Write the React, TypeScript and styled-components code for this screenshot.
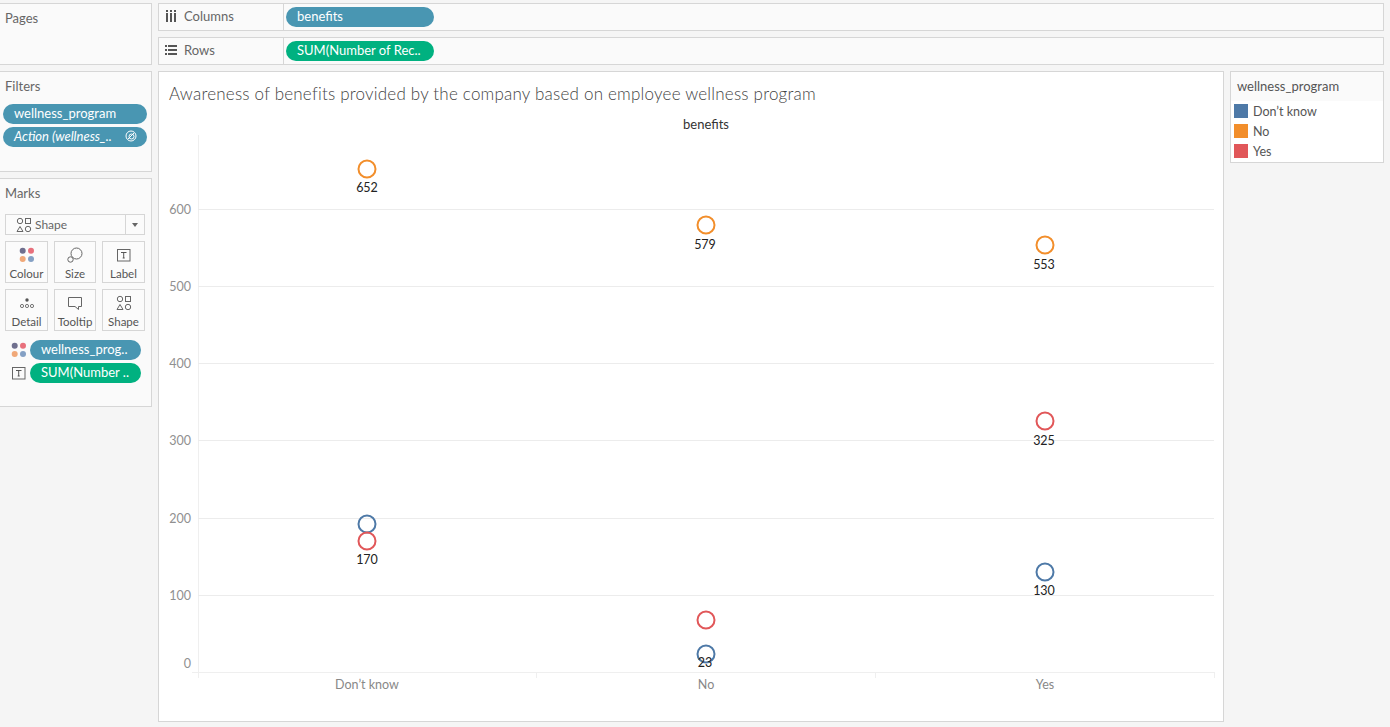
import React from "react";
import styled, { createGlobalStyle } from "styled-components";

const Global = createGlobalStyle`
  html, body { margin: 0; padding: 0; background: #f5f5f5; }
  body { font-family: Lato, "Open Sans", "Liberation Sans", sans-serif; color: #555; }
  #root { width: 1390px; height: 727px; overflow: hidden; }
`;

const Page = styled.div`
  display: grid;
  grid-template-columns: 152px 1226px;
  column-gap: 6px;
  padding-top: 3px;
  width: 1390px;
  height: 727px;
  box-sizing: border-box;
`;
const Side = styled.div`
  display: flex;
  flex-direction: column;
  gap: 6px;
`;
const Panel = styled.section<{ $h: number }>`
  height: ${(p) => p.$h}px;
  box-sizing: border-box;
  background: #fafafa;
  border: 1px solid #d6d6d6;
  border-left: 0;
`;
const PanelTitle = styled.div`
  font-size: 13px;
  line-height: 14px;
  color: #666;
  padding: 7px 0 1px 5px;
`;
const PillStack = styled.div`
  display: flex;
  flex-direction: column;
  gap: 3px;
  padding: 10px 4px 0 3px;
`;
const Pill = styled.div<{ $green?: boolean; $italic?: boolean; $w?: number }>`
  height: 20px;
  width: ${(p) => (p.$w ? `${p.$w}px` : "100%")};
  box-sizing: border-box;
  flex: none;
  border-radius: 10px;
  background: ${(p) => (p.$green ? "#00b180" : "#4996b2")};
  color: #fff;
  font-size: 13px;
  line-height: 18px;
  padding: 0 10px 2px 11px;
  font-style: ${(p) => (p.$italic ? "italic" : "normal")};
  white-space: nowrap;
  display: flex;
  align-items: center;
  justify-content: space-between;
`;
const MarkType = styled.div`
  margin: 13px 6px 0 5px;
  height: 21px;
  box-sizing: border-box;
  border: 1px solid #d6d6d6;
  display: flex;
  align-items: center;
  background: #fbfbfb;
  font-size: 12px;
  color: #666;
`;
const MarkTypeLabel = styled.div`
  flex: 1;
  display: flex;
  align-items: center;
  gap: 3px;
  padding-left: 10px;
`;
const Caret = styled.div`
  width: 18px;
  height: 100%;
  border-left: 1px solid #d6d6d6;
  display: flex;
  align-items: center;
  justify-content: center;
  &::after {
    content: "";
    border-left: 3.5px solid transparent;
    border-right: 3.5px solid transparent;
    border-top: 4px solid #666;
  }
`;
const CardGrid = styled.div`
  display: grid;
  grid-template-columns: 43px 42px 43px;
  grid-auto-rows: 42px;
  gap: 6px;
  margin: 6px 6px 0 5px;
`;
const Card = styled.div`
  border: 1px solid #d6d6d6;
  box-sizing: border-box;
  display: flex;
  flex-direction: column;
  align-items: center;
  background: #fbfbfb;
  font-size: 11.5px;
  line-height: 13px;
  color: #555;
`;
const CardIcon = styled.div`
  height: 24px;
  display: flex;
  align-items: center;
  justify-content: center;
  margin-top: 1px;
`;
const MarkRows = styled.div`
  display: flex;
  flex-direction: column;
  gap: 3px;
  margin: 9px 10px 0 11px;
`;
const MarkRow = styled.div`
  display: flex;
  align-items: center;
  gap: 3px;
`;
const MarkRowIcon = styled.div`
  width: 16px;
  display: flex;
  justify-content: center;
`;
const Main = styled.div`
  display: flex;
  flex-direction: column;
  gap: 6px;
`;
const Shelf = styled.div`
  height: 28px;
  box-sizing: border-box;
  border: 1px solid #d6d6d6;
  background: #fafafa;
  display: flex;
  align-items: center;
`;
const ShelfLabel = styled.div`
  width: 125px;
  height: 100%;
  box-sizing: border-box;
  border-right: 1px solid #d6d6d6;
  display: flex;
  align-items: center;
  gap: 7px;
  padding: 0 0 2px 6px;
  font-size: 13px;
  color: #666;
`;
const ShelfPills = styled.div`
  padding-left: 2px;
`;
const Body = styled.div`
  display: flex;
  gap: 6px;
  align-items: flex-start;
`;
const View = styled.div`
  width: 1066px;
  height: 651px;
  box-sizing: border-box;
  background: #fff;
  border: 1px solid #d6d6d6;
  position: relative;
`;
const Title = styled.div`
  font-size: 17px;
  font-weight: 300;
  line-height: 20px;
  color: #444;
  padding: 12px 0 0 10px;
  letter-spacing: 0.21px;
  white-space: nowrap;
`;
const ChartSvg = styled.svg`
  display: block;
  position: absolute;
  left: 0;
  top: 0;
  text {
    font-family: Lato, "Open Sans", "Liberation Sans", sans-serif;
  }
`;
const Legend = styled.aside`
  width: 154px;
  height: 92px;
  box-sizing: border-box;
  border: 1px solid #d6d6d6;
  background: #fff;
`;
const LegendTitle = styled.div`
  height: 29px;
  background: #fafafa;
  font-size: 13px;
  line-height: 29px;
  color: #555;
  padding-left: 6px;
`;
const LegendRows = styled.div`
  display: flex;
  flex-direction: column;
  gap: 6px;
  padding: 3px 0 0 3px;
`;
const LegendRow = styled.div`
  display: flex;
  align-items: center;
  gap: 5px;
  height: 14px;
  font-size: 12.5px;
  color: #555;
`;
const Swatch = styled.div<{ $c: string }>`
  width: 14px;
  height: 14px;
  background: ${(p) => p.$c};
`;

const ShapeIcon = ({ c = "#666" }: { c?: string }) => (
  <svg width="16" height="16" viewBox="0 0 16 16" fill="none" stroke={c} strokeWidth="1">
    <circle cx="4" cy="4" r="2.7" />
    <rect x="9.5" y="1.5" width="5" height="5" />
    <path d="M4 9.5l3 5H1z" />
    <circle cx="12" cy="12" r="2.7" />
  </svg>
);
const ColourIcon = ({ s = 16 }: { s?: number }) => (
  <svg width={s} height={s} viewBox="0 0 16 16">
    <circle cx="3.7" cy="3.8" r="3" fill="#6f6f8e" />
    <circle cx="12" cy="3.8" r="3" fill="#e8707c" />
    <circle cx="3.7" cy="12" r="3" fill="#f0a878" />
    <circle cx="12" cy="12" r="3" fill="#84a0c4" />
  </svg>
);
const TextBoxIcon = () => (
  <svg width="14" height="13" viewBox="0 0 14 13" fill="none">
    <rect x="0.5" y="0.5" width="12.5" height="11.5" stroke="#666" />
    <path d="M4 3.5h5.5M6.7 3.5v5.5M5.7 9h2" stroke="#555" />
  </svg>
);

const circles = [
  [367, 169, "#f28e2b"], [706, 225, "#f28e2b"], [1045, 245, "#f28e2b"],
  [1045, 421, "#e15759"], [367, 524, "#4e79a7"], [367, 541, "#e15759"],
  [1045, 572, "#4e79a7"], [706, 620, "#e15759"], [706, 654, "#4e79a7"],
] as const;
const values = [
  [367, 187, "652"], [705, 244, "579"], [1044, 264, "553"], [1044, 440, "325"],
  [367, 559, "170"], [1044, 590, "130"], [705, 662, "23"],
] as const;
const grid = [
  [209, "600"], [286, "500"], [363, "400"], [440, "300"], [518, "200"], [595, "100"],
] as const;

const Chart = () => (
  <ChartSvg width="1064" height="649" viewBox="159 72 1064 649">
    <line x1="198.5" y1="135" x2="198.5" y2="678" stroke="#efefef" />
    {grid.map(([y]) => (
      <line key={y} x1="198" x2="1214" y1={y + 0.5} y2={y + 0.5} stroke="#ececec" />
    ))}
    <line x1="192" x2="1214" y1="672.5" y2="672.5" stroke="#efefef" />
    {[536, 875, 1214].map((x) => (
      <line key={x} x1={x + 0.5} x2={x + 0.5} y1="672" y2="678" stroke="#efefef" />
    ))}
    <text x="706" y="129" fontSize="13" fill="#333" textAnchor="middle">benefits</text>
    {grid.map(([y, l]) => (
      <text key={l} x="191" y={y + 5} fontSize="12.500" fill="#909090" textAnchor="end">{l}</text>
    ))}
    <text x="191" y="668" fontSize="12.500" fill="#909090" textAnchor="end">0</text>
    <text x="367" y="689" fontSize="12.500" fill="#888" textAnchor="middle">Don’t know</text>
    <text x="706" y="689" fontSize="12.500" fill="#888" textAnchor="middle">No</text>
    <text x="1045" y="689" fontSize="12.500" fill="#888" textAnchor="middle">Yes</text>
    {circles.map(([x, y, c]) => (
      <circle key={`${x}-${y}`} cx={x} cy={y} r="8.5" fill="none" stroke={c} strokeWidth="2" />
    ))}
    {values.map(([x, y, t]) => (
      <text key={t} x={x} y={y + 5} fontSize="12.500" fill="#222" textAnchor="middle">{t}</text>
    ))}
  </ChartSvg>
);

export default function App() {
  return (
    <Page>
      <Global />
      <Side>
        <Panel $h={62}>
          <PanelTitle>Pages</PanelTitle>
        </Panel>
        <Panel $h={101}>
          <PanelTitle>Filters</PanelTitle>
          <PillStack>
            <Pill>wellness_program</Pill>
            <Pill $italic>
              Action (wellness_..
              <svg width="12" height="12" viewBox="0 0 12 12" fill="none" stroke="#fff">
                <circle cx="6" cy="6" r="5" />
                <circle cx="6.500" cy="6.500" r="2.500" />
                <path d="M3 9l6-6" />
              </svg>
            </Pill>
          </PillStack>
        </Panel>
        <Panel $h={229}>
          <PanelTitle>Marks</PanelTitle>
          <MarkType>
            <MarkTypeLabel>
              <ShapeIcon />
              Shape
            </MarkTypeLabel>
            <Caret />
          </MarkType>
          <CardGrid>
            <Card>
              <CardIcon><ColourIcon /></CardIcon>
              Colour
            </Card>
            <Card>
              <CardIcon>
                <svg width="16" height="16" viewBox="0 0 16 16" fill="none" stroke="#666">
                  <circle cx="9.5" cy="6.5" r="5.5" />
                  <circle cx="3.5" cy="12.5" r="2.7" fill="#fbfbfb" />
                </svg>
              </CardIcon>
              Size
            </Card>
            <Card>
              <CardIcon><TextBoxIcon /></CardIcon>
              Label
            </Card>
            <Card>
              <CardIcon>
                <svg width="16" height="16" viewBox="0 0 16 16" fill="none" stroke="#666" strokeWidth="0.9">
                  <circle cx="8" cy="5" r="1.7" fill="#555" stroke="none" />
                  <circle cx="3" cy="11" r="1.6" />
                  <circle cx="8" cy="11" r="1.6" />
                  <circle cx="13" cy="11" r="1.6" />
                </svg>
              </CardIcon>
              Detail
            </Card>
            <Card>
              <CardIcon>
                <svg width="16" height="16" viewBox="0 0 16 16" fill="none" stroke="#666">
                  <path d="M1.5 2.500h13v9h-3v3l-3.500-3h-6.500z" />
                </svg>
              </CardIcon>
              Tooltip
            </Card>
            <Card>
              <CardIcon><ShapeIcon /></CardIcon>
              Shape
            </Card>
          </CardGrid>
          <MarkRows>
            <MarkRow>
              <MarkRowIcon><ColourIcon /></MarkRowIcon>
              <Pill $w={111}>wellness_prog..</Pill>
            </MarkRow>
            <MarkRow>
              <MarkRowIcon><TextBoxIcon /></MarkRowIcon>
              <Pill $green $w={111}>SUM(Number ..</Pill>
            </MarkRow>
          </MarkRows>
        </Panel>
      </Side>
      <Main>
        <Shelf>
          <ShelfLabel>
            <svg width="12" height="12" viewBox="0 0 12 12" fill="#555">
              <rect x="1" y="3" width="2" height="9" />
              <rect x="5" y="3" width="2" height="9" />
              <rect x="9" y="3" width="2" height="9" />
              <rect x="1" y="0" width="2" height="2" />
              <rect x="5" y="0" width="2" height="2" />
              <rect x="9" y="0" width="2" height="2" />
            </svg>
            Columns
          </ShelfLabel>
          <ShelfPills><Pill $w={148}>benefits</Pill></ShelfPills>
        </Shelf>
        <Shelf>
          <ShelfLabel>
            <svg width="12" height="12" viewBox="0 0 12 12" fill="#555">
              <rect x="0" y="1" width="2" height="2" />
              <rect x="0" y="5" width="2" height="2" />
              <rect x="0" y="9" width="2" height="2" />
              <rect x="3" y="1" width="9" height="2" />
              <rect x="3" y="5" width="9" height="2" />
              <rect x="3" y="9" width="9" height="2" />
            </svg>
            Rows
          </ShelfLabel>
          <ShelfPills><Pill $green $w={148}>SUM(Number of Rec..</Pill></ShelfPills>
        </Shelf>
        <Body>
          <View>
            <Chart />
            <Title>Awareness of benefits provided by the company based on employee wellness program</Title>
          </View>
          <Legend>
            <LegendTitle>wellness_program</LegendTitle>
            <LegendRows>
              <LegendRow><Swatch $c="#4e79a7" />Don’t know</LegendRow>
              <LegendRow><Swatch $c="#f28e2b" />No</LegendRow>
              <LegendRow><Swatch $c="#e15759" />Yes</LegendRow>
            </LegendRows>
          </Legend>
        </Body>
      </Main>
    </Page>
  );
}
